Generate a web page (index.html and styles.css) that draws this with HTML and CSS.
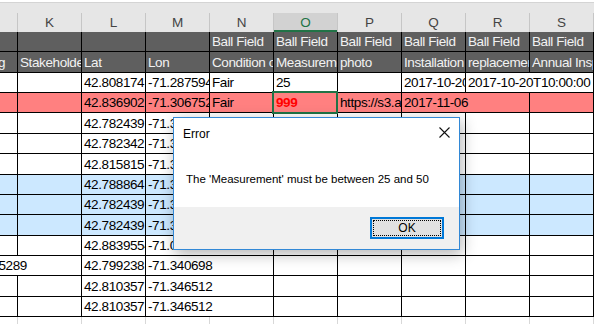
FILE: index.html
```html
<!DOCTYPE html>
<html lang="en">
<head>
    <meta charset="UTF-8">
    <meta name="viewport" content="width=device-width, initial-scale=1.0">
    <title>Ball Fields</title>
    <link rel="stylesheet" href="styles.css">
</head>
<body>
    <div class="top"></div>
    <div class="colheads">
        <div class="ch"></div>
        <div class="ch">K</div>
        <div class="ch">L</div>
        <div class="ch">M</div>
        <div class="ch">N</div>
        <div class="ch sel">O</div>
        <div class="ch">P</div>
        <div class="ch">Q</div>
        <div class="ch">R</div>
        <div class="ch">S</div>
    </div>
    <div class="sheet">
        <div class="row dark">
            <div class="c"></div><div class="c"></div><div class="c"></div><div class="c"></div>
            <div class="c">Ball Field</div><div class="c">Ball Field</div><div class="c">Ball Field</div>
            <div class="c">Ball Field</div><div class="c">Ball Field</div><div class="c">Ball Field</div>
        </div>
        <div class="row dark">
            <div class="c"><span class="tail-j">ng</span></div>
            <div class="c">Stakeholder</div>
            <div class="c">Lat</div>
            <div class="c">Lon</div>
            <div class="c">Condition of Field</div>
            <div class="c">Measurement</div>
            <div class="c">photo</div>
            <div class="c">Installation Date</div>
            <div class="c">replacement date</div>
            <div class="c">Annual Inspection</div>
        </div>
        <div class="row">
            <div class="c"></div><div class="c"></div>
            <div class="c">42.808174</div>
            <div class="c">-71.2875943</div>
            <div class="c">Fair</div>
            <div class="c">25</div>
            <div class="c"></div>
            <div class="c">2017-10-20T10:00:00</div>
            <div class="c ov">2017-10-20T10:00:00</div>
            <div class="c"></div>
        </div>
        <div class="row bad">
            <div class="c"></div><div class="c"></div>
            <div class="c">42.836902</div>
            <div class="c">-71.3067521</div>
            <div class="c">Fair</div>
            <div class="c active"><b class="err">999</b><span class="pick"></span></div>
            <div class="c">https://s3.amazonaws.com/photo.jpg</div>
            <div class="c ov">2017-11-06</div>
            <div class="c"></div>
            <div class="c"></div>
        </div>
        <div class="row">
            <div class="c"></div><div class="c"></div>
            <div class="c">42.782439</div><div class="c">-71.306125</div>
            <div class="c"></div><div class="c"></div><div class="c"></div><div class="c"></div><div class="c"></div><div class="c"></div>
        </div>
        <div class="row">
            <div class="c"></div><div class="c"></div>
            <div class="c">42.782342</div><div class="c">-71.306021</div>
            <div class="c"></div><div class="c"></div><div class="c"></div><div class="c"></div><div class="c"></div><div class="c"></div>
        </div>
        <div class="row">
            <div class="c"></div><div class="c"></div>
            <div class="c">42.815815</div><div class="c">-71.312246</div>
            <div class="c"></div><div class="c"></div><div class="c"></div><div class="c"></div><div class="c"></div><div class="c"></div>
        </div>
        <div class="row blue">
            <div class="c"></div><div class="c"></div>
            <div class="c">42.788864</div><div class="c">-71.315470</div>
            <div class="c"></div><div class="c"></div><div class="c"></div><div class="c"></div><div class="c"></div><div class="c"></div>
        </div>
        <div class="row blue">
            <div class="c"></div><div class="c"></div>
            <div class="c">42.782439</div><div class="c">-71.306125</div>
            <div class="c"></div><div class="c"></div><div class="c"></div><div class="c"></div><div class="c"></div><div class="c"></div>
        </div>
        <div class="row blue">
            <div class="c"></div><div class="c"></div>
            <div class="c">42.782439</div><div class="c">-71.306125</div>
            <div class="c"></div><div class="c"></div><div class="c"></div><div class="c"></div><div class="c"></div><div class="c"></div>
        </div>
        <div class="row">
            <div class="c"></div><div class="c"></div>
            <div class="c">42.8839554</div>
            <div class="c ov">-71.0883978230000</div>
            <div class="c"></div><div class="c"></div><div class="c"></div><div class="c"></div><div class="c"></div><div class="c"></div>
        </div>
        <div class="row">
            <div class="c ov"><span class="tail-num">5289</span></div><div class="c"></div>
            <div class="c">42.799238</div><div class="c ov">-71.340698</div>
            <div class="c"></div><div class="c"></div><div class="c"></div><div class="c"></div><div class="c"></div><div class="c"></div>
        </div>
        <div class="row">
            <div class="c"></div><div class="c"></div>
            <div class="c">42.810357</div><div class="c ov">-71.346512</div>
            <div class="c"></div><div class="c"></div><div class="c"></div><div class="c"></div><div class="c"></div><div class="c"></div>
        </div>
        <div class="row">
            <div class="c"></div><div class="c"></div>
            <div class="c">42.810357</div><div class="c ov">-71.346512</div>
            <div class="c"></div><div class="c"></div><div class="c"></div><div class="c"></div><div class="c"></div><div class="c"></div>
        </div>
        <div class="row empty">
            <div class="c"></div><div class="c"></div><div class="c"></div><div class="c"></div><div class="c"></div>
            <div class="c"></div><div class="c"></div><div class="c"></div><div class="c"></div><div class="c"></div>
        </div>
    </div>

    <div class="dialog">
        <div class="dialog-title">
            <span>Error</span>
            <svg class="close" width="11" height="11" viewBox="0 0 11 11">
                <path d="M0.5 0.5L10.5 10.5M10.5 0.5L0.5 10.5" stroke="#111" stroke-width="1.1" fill="none"/>
            </svg>
        </div>
        <div class="dialog-body">The 'Measurement' must be between 25 and 50</div>
        <div class="dialog-foot">
            <button class="ok">OK</button>
        </div>
    </div>
</body>
</html>
```

FILE: styles.css
```css
body {
    margin: 0;
    width: 594px;
    height: 324px;
    overflow: hidden;
    background: #fff;
    font-family: "Liberation Sans", Arial, sans-serif;
}
.top {
    height: 13px;
    box-sizing: border-box;
    border-top: 2px solid #fff;
    background: #e6e6e6;
    box-shadow: inset 0 1px 0 #d4d4d4;
}
.colheads {
    display: grid;
    grid-template-columns: 18px repeat(9, 64px);
    height: 19px;
    background: #e6e6e6;
}
.ch {
    border-right: 1px solid #c6c6c6;
    text-align: center;
    font-size: 13.5px;
    line-height: 19px;
    color: #444;
}
.ch.sel {
    background: #d2d2d2;
    color: #217346;
    box-shadow: inset 0 -2px 0 #217346;
}
.row {
    display: grid;
    grid-template-columns: 18px repeat(9, 64px);
    height: 20.36px;
    box-sizing: border-box;
    border-bottom: 1px solid #000;
    font-size: 13.5px;
    letter-spacing: -0.4px;
    color: #000;
}
.row.dark {
    background: #5f5f5f;
    color: #f2f2f2;
}
.row.bad {
    background: #ff8080;
}
.row.blue {
    background: #cce8ff;
}
.row.empty {
    border-bottom: none;
}
.row.empty .c {
    border-right-color: #d8d8d8;
}
.c {
    border-right: 1px solid #000;
    padding: 0 2px 1px;
    white-space: nowrap;
    overflow: hidden;
    display: flex;
    align-items: flex-end;
    line-height: 16px;
    min-width: 0;
}
.c.ov {
    overflow: visible;
    border-right-color: transparent;
}
.tail-j {
    margin-left: -11px;
}
.tail-num {
    margin-left: -3.5px;
}
.c.active {
    position: relative;
    overflow: visible;
}
.err {
    color: #ff0000;
}
.pick {
    position: absolute;
    left: -2px;
    top: -2px;
    right: -1px;
    bottom: -2px;
    border: 2px solid #217346;
}
.dialog {
    position: absolute;
    left: 173px;
    top: 117px;
    width: 287px;
    height: 133px;
    box-sizing: border-box;
    border: 1px solid #3288d6;
    background: #fff;
    box-shadow: 2px 4px 14px rgba(0, 0, 0, 0.3);
    font-size: 12px;
    color: #000;
}
.dialog-title {
    height: 31px;
    display: flex;
    align-items: center;
    justify-content: space-between;
    padding: 0 9px;
    line-height: 14px;
}
.close {
    display: block;
    margin-top: -2px;
}
.dialog-body {
    height: 58px;
    box-sizing: border-box;
    padding: 23px 0 0 12px;
    font-size: 11.5px;
    line-height: 14px;
}
.dialog-foot {
    height: 42px;
    background: #f0f0f0;
    display: flex;
    justify-content: flex-end;
    align-items: flex-start;
    padding: 10px 15px 0 0;
    box-sizing: border-box;
}
.ok {
    width: 74px;
    height: 22px;
    box-sizing: border-box;
    border: 2px solid #0078d7;
    background: #e1e1e1;
    font-family: "Liberation Sans", Arial, sans-serif;
    font-size: 12px;
    color: #000;
    padding: 0;
    outline: 1px dotted #000;
    outline-offset: -4px;
}
```
